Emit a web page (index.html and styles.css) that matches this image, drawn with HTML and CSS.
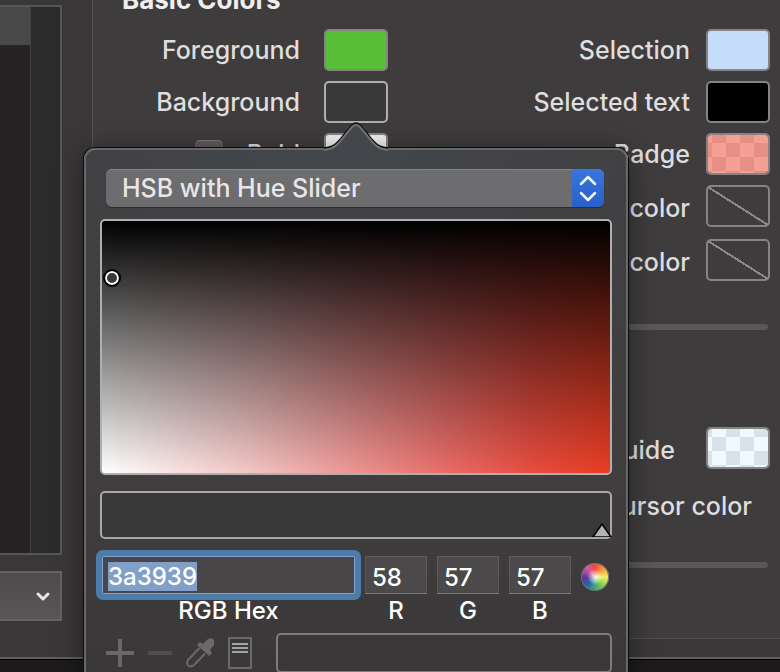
FILE: index.html
```html
<!DOCTYPE html>
<html lang="en">
<head>
<meta charset="utf-8">
<title>Profile Colors</title>
<link rel="stylesheet" href="styles.css">
</head>
<body>
<main class="window">
  <aside class="sidebar">
    <div class="list">
      <div class="list-items"><div class="list-head"></div></div>
      <div class="list-scroller"></div>
    </div>
    <button class="actions" aria-label="Other actions">
      <svg width="16" height="12" viewBox="0 0 16 12"><path d="M3 4l5 5 5-5" fill="none" stroke="#e8e6e7" stroke-width="3" stroke-linecap="round" stroke-linejoin="round"/></svg>
    </button>
  </aside>
  <section class="pane">
    <h2 class="heading">Basic Colors</h2>
    <div class="columns">
      <div class="form form-left">
        <div class="row"><label for="fg">Foreground</label><button id="fg" class="swatch green"></button></div>
        <div class="row anchor"><label for="bg">Background</label><button id="bg" class="swatch active"></button>
          <div class="popover" role="dialog" aria-label="Color picker">
            <svg class="arrow" width="64" height="30" viewBox="0 0 64 30">
              <path d="M0 27C13 26 14 20 28 4Q32 0 36 4C50 20 51 26 64 27V30H0Z" fill="#43464b"/>
              <path d="M0 26C13 25 14 19 28 3Q32 -1 36 3C50 19 51 25 64 26" fill="none" stroke="#0c0c0c" stroke-width="1.5"/>
              <path d="M0 28C13 27 14 21 28 5Q32 1 36 5C50 21 51 27 64 28" fill="none" stroke="#6e6f71" stroke-width="2"/>
            </svg>
            <div class="mode">
              <select aria-label="Color model"><option>HSB with Hue Slider</option></select>
              <span class="stepper"><svg width="20" height="28" viewBox="0 0 20 28"><path d="M3 10l7-7 7 7M3 19l7 7 7-7" fill="none" stroke="#eef3fc" stroke-width="2.5" stroke-linecap="round" stroke-linejoin="round"/></svg></span>
            </div>
            <div class="field"><span class="cursor"></span></div>
            <div class="hue"><svg class="thumb" width="20" height="14" viewBox="0 0 20 14"><path d="M1 14L10 1l9 13z" fill="#b4b4b4" stroke="#000" stroke-width="1.5"/></svg></div>
            <div class="values">
              <div class="value hex"><input id="hex" value="3a3939" autofocus><label for="hex">RGB Hex</label></div>
              <div class="value"><input id="r" value="58"><label for="r">R</label></div>
              <div class="value"><input id="g" value="57"><label for="g">G</label></div>
              <div class="value"><input id="b" value="57"><label for="b">B</label></div>
              <button class="wheel" aria-label="Color wheel"></button>
            </div>
            <div class="tools">
              <button aria-label="Add"><svg width="28" height="28" viewBox="0 0 28 28"><path d="M14 0v28M0 14h28" stroke="#696768" stroke-width="4"/></svg></button>
              <button aria-label="Remove"><svg width="24" height="28" viewBox="0 0 24 28"><path d="M0 14h24" stroke="#504e4f" stroke-width="4"/></svg></button>
              <button aria-label="Pick from screen"><svg width="28" height="30" viewBox="0 0 28 30"><path d="M13.500 10L2.500 21.500Q0 25 2 27.500Q5 29.500 8 27L19 15.500" fill="none" stroke="#6b696a" stroke-width="2"/><path d="M12 7l2-2 3 2 5-5q3-2 5 0t0 5l-4 5 2 3-2 2z" fill="#6b696a" stroke="#6b696a" stroke-linejoin="round" stroke-width="1.500"/></svg></button>
              <button aria-label="Swatch list"><svg width="24" height="32" viewBox="0 0 24 32"><path d="M1 1h22v30H1z" fill="none" stroke="#6b696a" stroke-width="2"/><path d="M4 7h16M4 11h16M4 15h16" stroke="#a5a4a4" stroke-width="2"/></svg></button>
              <div class="well"></div>
            </div>
          </div>
        </div>
        <div class="row"><input type="checkbox" id="boldon" class="check"><label for="boldon">Bold</label><button class="swatch white" aria-label="Bold color"></button></div>
      </div>
      <div class="form form-right">
        <div class="row"><label for="sel">Selection</label><button id="sel" class="swatch blue"></button></div>
        <div class="row"><label for="selt">Selected text</label><button id="selt" class="swatch black"></button></div>
        <div class="row"><label for="badge">Badge</label><button id="badge" class="swatch badge"></button></div>
        <div class="row low"><label for="tab">Tab color</label><button id="tab" class="swatch none"></button></div>
        <div class="row low last"><label for="ul">Underline color</label><button id="ul" class="swatch none"></button></div>
      </div>
    </div>
    <hr class="rule">
    <div class="cursor-group">
      <div class="row low"><label class="wide" for="guide">Cursor guide</label><button id="guide" class="swatch guide"></button></div>
      <div class="boost">Smart cursor color</div>
    </div>
    <hr class="rule">
  </section>
</main>
<script src="script.js"></script>
</body>
</html>
```
FILE: styles.css
```css
* { box-sizing: border-box; }
body {
  margin: 0;
  height: 100vh;
  overflow: hidden;
  background: #1d1b1c;
  color: #dfdddd;
  font: 500 25px/30px Inter, "Liberation Sans", sans-serif;
}
button, input, select { font: inherit; color: inherit; margin: 0; padding: 0; border: 0; border-radius: 0; background: none; }
svg { display: block; }
.window {
  display: flex;
  gap: 30px;
  height: calc(100vh - 13px);
  padding: 5px 0 18px;
  background: #3a3738;
  border-bottom: 2px solid #626061;
  box-shadow: 0 1px 0 #000;
}
.sidebar { display: flex; flex-direction: column; gap: 16px; width: 62px; padding-bottom: 18px; }
.list { flex: 1; display: flex; border: 2px solid #585657; border-left: 0; background: #2b2b2b; }
.list-items { flex: 1; background: #252324; border-right: 1px solid #444243; }
.list-head { height: 38px; background: #494949; }
.list-scroller { width: 29px; }
.actions {
  height: 50px;
  padding-right: 9px;
  display: flex;
  align-items: center;
  justify-content: flex-end;
  border: 2px solid #646263;
  border-left: 0;
  background: linear-gradient(#4d4b4c, #585657);
}
.pane {
  flex: 1;
  min-width: 0;
  margin-top: -25px;
  background: #3e3c3d;
  border-left: 1px solid #545253;
  border-bottom: 1px solid #504e4f;
}
.heading { margin: 0 0 14px 29px; font-size: 26px; line-height: 30px; padding-top: 5px; font-weight: 700; color: #f0eeee; }
.columns { display: flex; padding-right: 10px; }
.form { display: flex; flex-direction: column; gap: 10px; }
.form-left { width: 295px; }
.form-right { flex: 1; }
.row { display: flex; align-items: center; justify-content: flex-end; gap: 16px; white-space: nowrap; }
.form-left .row { gap: 24px; }
.low label { padding-top: 4px; }
.anchor { position: relative; }
.last { margin-top: 2px; }
.swatch { width: 64px; height: 42px; border: 2px solid #858384; border-radius: 5px; }
.active { border-color: #b0aeaf; background: #3a3939; }
.green { background: #58bf38; }
.white { background: #f0f0f0; }
.blue { background: #c6dcfb; }
.black { background: #000; }
.badge { background: repeating-conic-gradient(#e68f84 0 25%, #f5a094 0 50%) 4px 8px / 28px 28px padding-box; }
.guide { background: repeating-conic-gradient(#d8e2e8 0 25%, #effaff 0 50%) 18px 8px / 28px 28px padding-box; }
.none { background: linear-gradient(to top right, transparent calc(50% - 1px), #8b898a calc(50% - 1px) calc(50% + 1px), transparent calc(50% + 1px)); }
.check { appearance: none; width: 28px; height: 28px; border-radius: 5px; background: #5e5c5d; border-top: 1px solid #777; }
.rule { height: 6px; margin: 43px 12px 0 0; border: 0; border-radius: 0 3px 3px 0; background: #595758; }
.cursor-group { padding: 97px 10px 0 0; margin-bottom: -2px; }
.wide { margin-right: 15px; }
.boost { margin: 22px 18px 0 0; text-align: right; }
.popover {
  position: absolute;
  z-index: 2;
  top: 67px;
  right: -240px;
  width: 544px;
  padding: 19px 14px 14px;
  border: 2px solid #68686a;
  border-radius: 11px;
  background: radial-gradient(ellipse 320px 130px at 45% 0, #42464b, transparent), linear-gradient(#414143, #403e3f 60%, #393738);
  box-shadow: 0 0 0 1px #0a0a0a, 0 4px 28px rgba(0, 0, 0, .45);
  color: #fff;
}
.arrow { position: absolute; top: -28px; left: 50%; margin-left: -32px; }
.mode { display: flex; margin: 0 8px 0 6px; height: 38px; border-radius: 6px; overflow: hidden; background: #6d6c6e; box-shadow: inset 0 1px 0 #858486, 0 1px 1px #2a2a2a; }
.mode select { flex: 1; appearance: none; padding-left: 16px; color: #e8e6e8; }
.stepper { width: 32px; display: grid; place-items: center; background: linear-gradient(#3a76e0, #2660c8); }
.field {
  position: relative;
  height: 256px;
  margin-top: 12px;
  border: 2px solid #b0aeaf;
  border-radius: 5px;
  background: linear-gradient(#000, transparent), linear-gradient(to right, #fff, #f3c8c6 28%, #ec9492 50%, #e86c67 68%, #e74c3f 85%, #e83d22);
}
.cursor { position: absolute; left: 3px; top: 50px; width: 14px; height: 14px; border: 2px solid #fff; border-radius: 50%; outline: 2px solid #000; background: #3a3939; }
.hue { position: relative; height: 48px; margin-top: 16px; border: 2px solid #a9a7a8; border-radius: 5px; background: #393839; }
.thumb { position: absolute; right: -2px; bottom: 0; }
.values { display: flex; gap: 10px; margin-top: 17px; padding: 0 3px 0 2px; }
.value { display: flex; flex-direction: column; width: 62px; text-align: center; font-size: 24px; }
.value input { width: 100%; height: 38px; padding: 4px 6px 0; background: #4b494a; border: 1px solid #5b595a; border-bottom-color: #7a7879; }
.value label { line-height: 32px; margin-top: 1px; }
.hex { flex: 1; }
.value.hex input { padding: 3px 5px 0; background: #484647; border: 1px solid #80a5cc; outline: 6px solid #4c7daa; border-radius: 1px; }
::selection { background: #829fc8; color: #fff; }
.wheel {
  width: 28px;
  height: 28px;
  margin-top: 7px;
  border-radius: 50%;
  background: radial-gradient(rgba(255, 255, 255, .9), transparent 40%), conic-gradient(#f04a34, #f59a3c 45deg, #f2ef63 90deg, #84cc52 140deg, #3aa086 185deg, #2d5fa8 225deg, #5b3690 265deg, #d659a8 320deg, #f04a34);
  box-shadow: inset 0 0 0 1px #777;
}
.tools { display: flex; align-items: center; margin-top: 6px; padding-left: 6px; gap: 14px; }
.well { flex: 1; height: 40px; margin-left: 10px; border: 2px solid #7d7b7c; border-radius: 5px; background: #393738; }
```
FILE: script.js
```js
const hex = document.getElementById("hex");
hex.focus({ preventScroll: true });
hex.select();
```
